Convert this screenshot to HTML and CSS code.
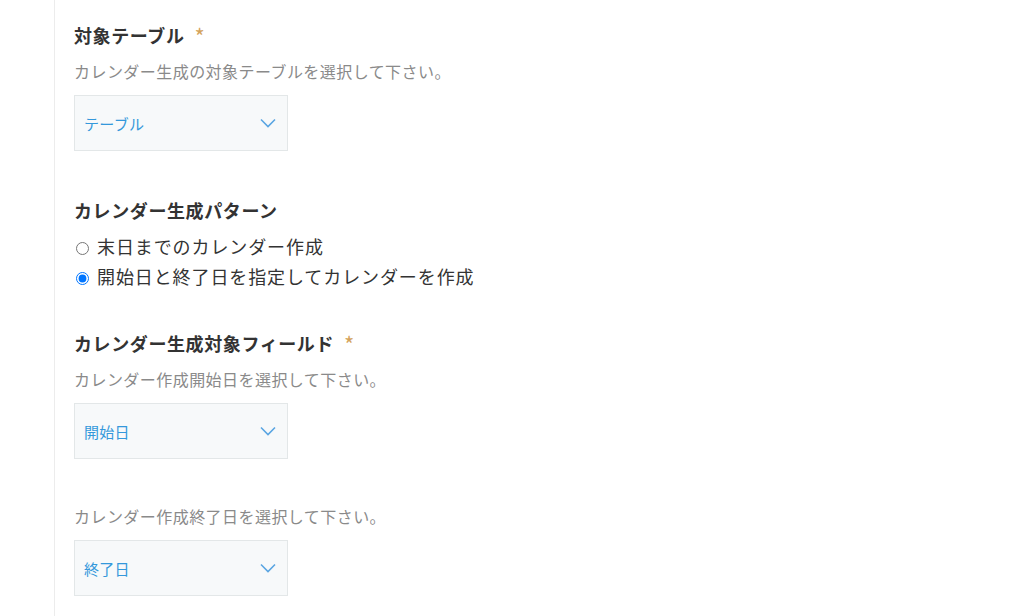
FILE: index.html
```html
<!DOCTYPE HTML>
<html>
<head>
<meta charset="utf-8">
<title>カレンダー生成 設定</title>
<link rel="stylesheet" href="styles.css">
</head>
<body>
<div class="config">

<!-- 対象テーブル -->
<div class="row">
	<h3 class="title">対象テーブル<span class="req">*</span></h3>
	<p class="desc">カレンダー生成の対象テーブルを選択して下さい。</p>
	<div class="select">
		<span class="select-text">テーブル</span>
		<svg class="chevron" width="16" height="10" viewBox="0 0 16 10"><path d="M1 1.5 L8 8.5 L15 1.5" fill="none" stroke="#5aa5e2" stroke-width="1.6"/></svg>
	</div>
</div>

<!-- パターン -->
<div class="row row-pattern">
	<h3 class="title">カレンダー生成パターン</h3>
	<ul class="radios">
		<li><label><input type="radio" name="pattern" value="1">末日までのカレンダー作成</label></li>
		<li><label><input type="radio" name="pattern" value="2" checked>開始日と終了日を指定してカレンダーを作成</label></li>
	</ul>
</div>

<!-- 対象フィールド -->
<div class="row row-field">
	<h3 class="title">カレンダー生成対象フィールド<span class="req">*</span></h3>
	<p class="desc">カレンダー作成開始日を選択して下さい。</p>
	<div class="select">
		<span class="select-text">開始日</span>
		<svg class="chevron" width="16" height="10" viewBox="0 0 16 10"><path d="M1 1.5 L8 8.5 L15 1.5" fill="none" stroke="#5aa5e2" stroke-width="1.6"/></svg>
	</div>
	<p class="desc desc-sub">カレンダー作成終了日を選択して下さい。</p>
	<div class="select">
		<span class="select-text">終了日</span>
		<svg class="chevron" width="16" height="10" viewBox="0 0 16 10"><path d="M1 1.5 L8 8.5 L15 1.5" fill="none" stroke="#5aa5e2" stroke-width="1.6"/></svg>
	</div>
</div>

</div>
</body>
</html>
```

FILE: styles.css
```css
html, body {
		margin:0;
		padding:0;
		background:#fff;
		height:100%;
	}

body {
		font-family:"Noto Sans CJK JP", "Noto Sans", sans-serif;
		color:#333;
	}

.config {
		margin-left:54px;
		border-left:1px solid #ececec;
		padding:23px 0 0 19px;
		min-height:100%;
		box-sizing:border-box;
	}

.title {
		margin:0;
		font-size:18px;
		line-height:24px;
		font-weight:bold;
		letter-spacing:0.6px;
		color:#333;
	}

.req {
		color:#d4a35c;
		margin-left:10px;
		font-size:22px;
		font-weight:normal;
		vertical-align:top;
		line-height:24px;
	}

.desc {
		margin:14px 0 14px;
		font-size:16px;
		line-height:20px;
		letter-spacing:0.45px;
		color:#8a8a8a;
	}

.desc-sub {
		margin-top:47px;
		margin-bottom:14px;
	}

.select {
		width:214px;
		height:56px;
		box-sizing:border-box;
		background:#f7f9fa;
		border:1px solid #e3e7e8;
		display:flex;
		align-items:center;
		justify-content:space-between;
		padding:0 11px 0 9px;
	}

.select-text {
		font-size:15px;
		letter-spacing:0.3px;
		color:#3498db;
	}

.chevron {
		display:block;
	}

.row-pattern {
		margin-top:47px;
	}

.radios {
		list-style:none;
		margin:9px 0 0;
		padding:0;
	}

.radios li {
		font-size:18px;
		line-height:30px;
		letter-spacing:0.9px;
	}

.radios input {
		margin:0 8px 0 2px;
		width:13px;
		height:13px;
		vertical-align:-1px;
	}

.row-field {
		margin-top:40px;
	}
```
